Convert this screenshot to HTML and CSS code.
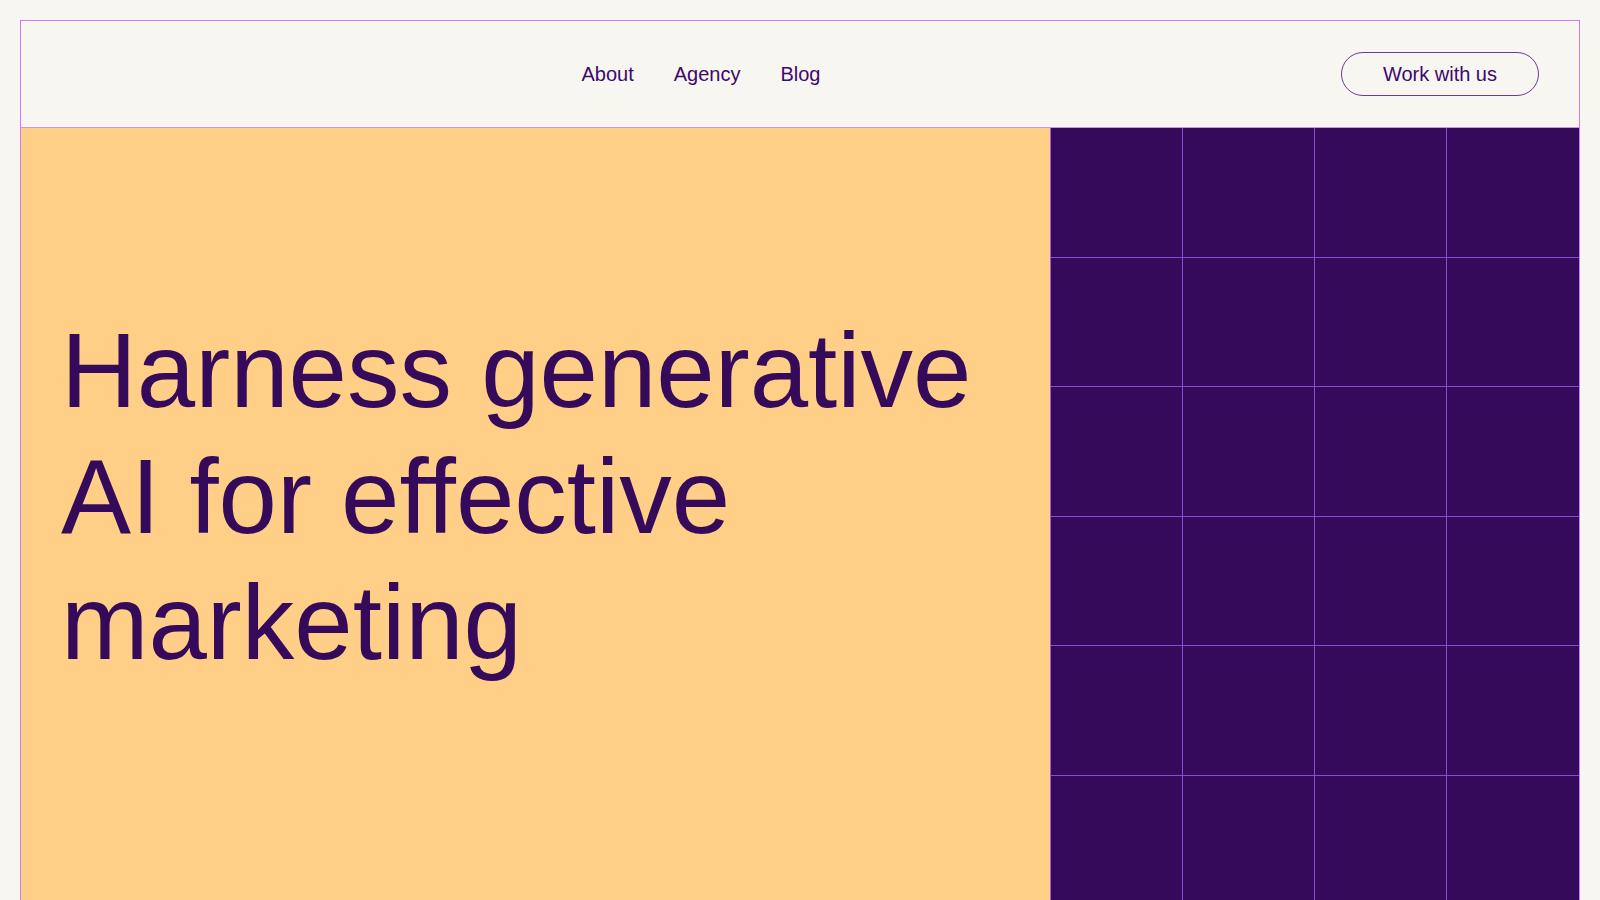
FILE: index.html
```html
<!DOCTYPE html>
<html lang="en">
<head>
<meta charset="utf-8">
<title>Harness generative AI</title>
<link rel="stylesheet" href="styles.css">
</head>
<body>
<div class="frame">
  <header class="header">
    <div class="logo"></div>
    <nav class="nav">
      <a href="#" class="nav-link">About</a>
      <a href="#" class="nav-link">Agency</a>
      <a href="#" class="nav-link">Blog</a>
    </nav>
    <a href="#" class="cta">Work with us</a>
  </header>
  <section class="hero">
    <div class="hero-text">
      <h1 class="headline">Harness generative AI for effective marketing</h1>
    </div>
    <div class="hero-grid">
      <div class="cell"></div><div class="cell"></div><div class="cell"></div><div class="cell"></div>
      <div class="cell"></div><div class="cell"></div><div class="cell"></div><div class="cell"></div>
      <div class="cell"></div><div class="cell"></div><div class="cell"></div><div class="cell"></div>
      <div class="cell"></div><div class="cell"></div><div class="cell"></div><div class="cell"></div>
      <div class="cell"></div><div class="cell"></div><div class="cell"></div><div class="cell"></div>
      <div class="cell"></div><div class="cell"></div><div class="cell"></div><div class="cell"></div>
    </div>
  </section>
</div>
</body>
</html>
```
FILE: styles.css
```css
* { box-sizing: border-box; }
html, body {
  margin: 0;
  padding: 0;
  background: #f8f6f1;
  font-family: "Liberation Sans", Arial, sans-serif;
  color: #360a5a;
}
body { padding: 20px 20px 0; overflow: hidden; }

.frame {
  border: 1px solid #c77dff;
}

.header {
  height: 107px;
  border-bottom: 1px solid #c99be6;
  display: flex;
  align-items: center;
  justify-content: space-between;
  padding: 0 40px;
}
.logo { width: 0; }
.nav {
  display: flex;
  gap: 40px;
}
.nav-link {
  font-size: 20px;
  line-height: 23px;
  color: #3c096c;
  text-decoration: none;
}
.cta {
  font-size: 20px;
  line-height: 22px;
  color: #3c096c;
  text-decoration: none;
  border: 1px solid #6a3b96;
  border-radius: 999px;
  padding: 10px 41px;
}

.hero {
  display: flex;
}
.hero-text {
  width: 1029px;
  background: #ffcf87;
  padding: 180px 40px 0;
}
.headline {
  margin: 0;
  font-weight: 400;
  font-size: 105px;
  line-height: 126px;
  color: #360a5a;
  max-width: 920px;
}
.hero-grid {
  flex: 1;
  background: #360a5a;
  border-left: 1px solid #9b5be0;
  display: grid;
  grid-template-columns: repeat(4, 1fr);
  grid-auto-rows: 129.5px;
}
.cell {
  border-right: 1px solid #8a4ccf;
  border-bottom: 1px solid #8a4ccf;
}
.cell:nth-child(4n) { border-right: none; }
```
